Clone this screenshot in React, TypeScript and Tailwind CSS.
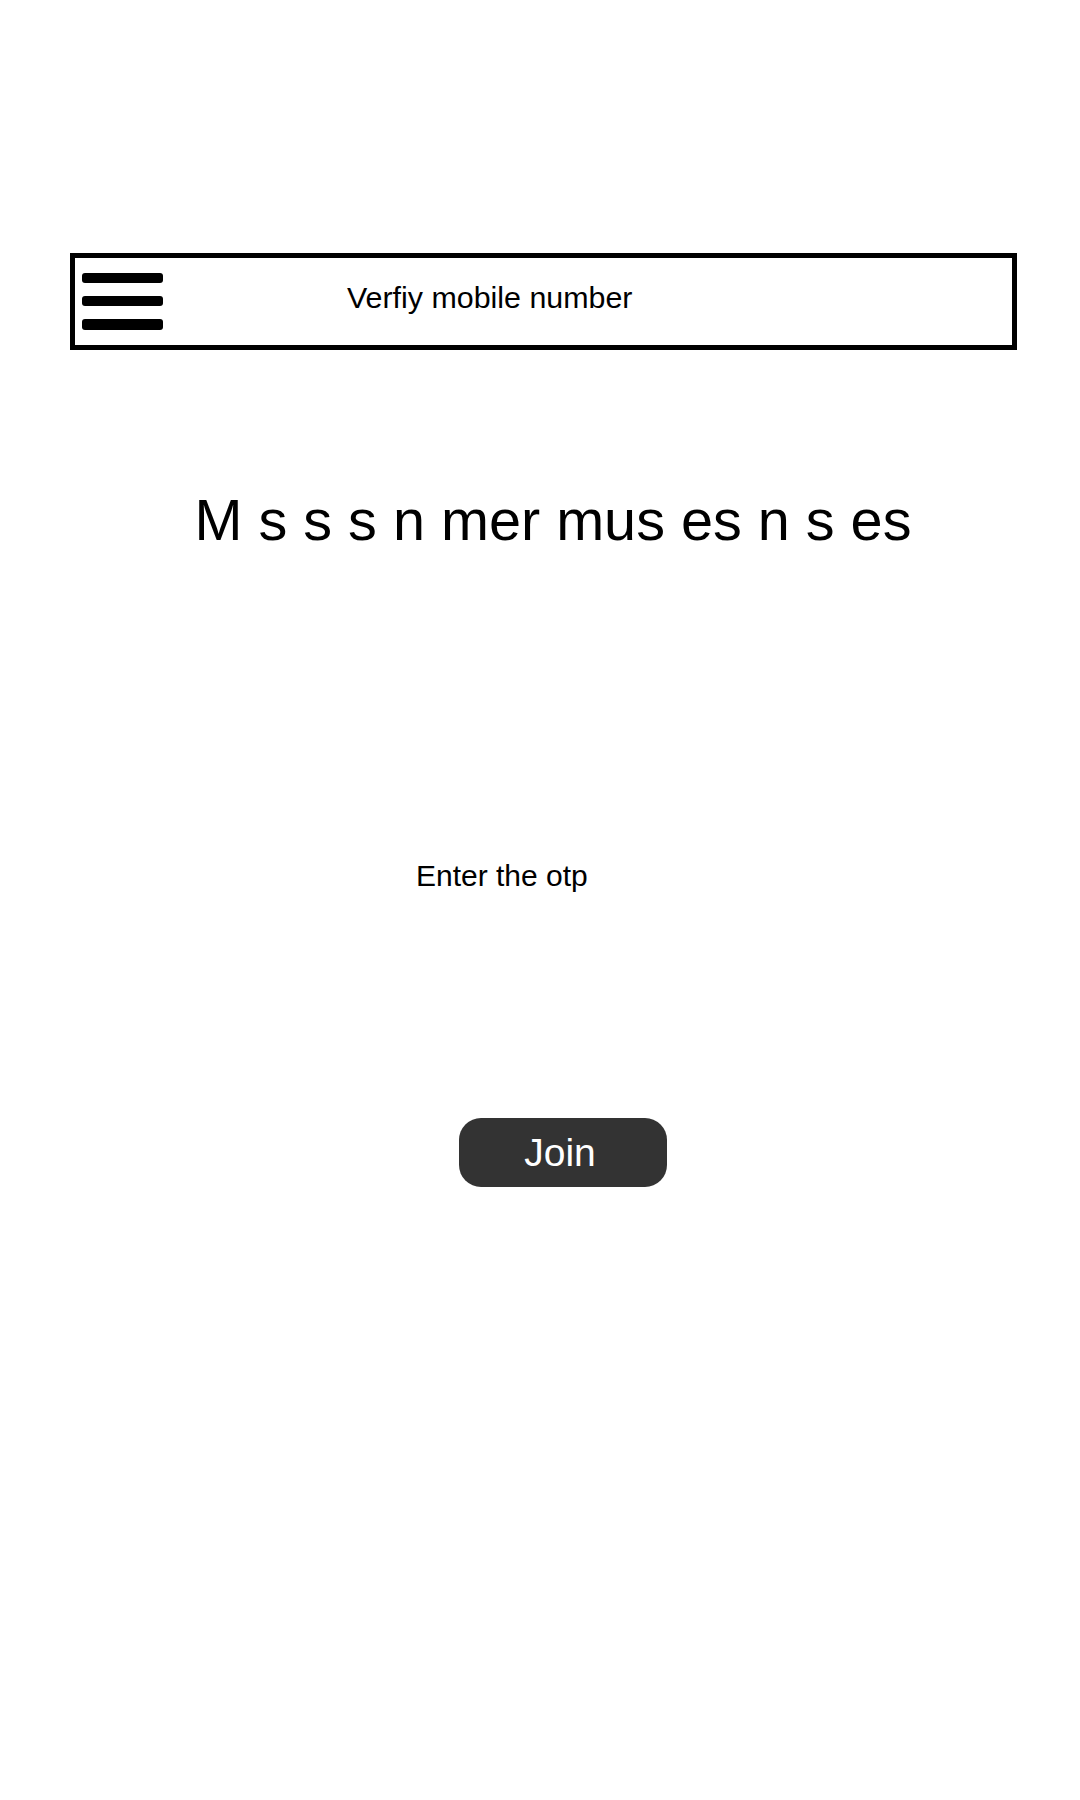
import React from "react";

function MenuIcon() {
  return (
    <div className="flex flex-col gap-[13px] pl-[7px]" aria-hidden="true">
      <span className="block h-[10px] w-[81px] rounded-[3px] bg-black" />
      <span className="block h-[10px] w-[81px] rounded-[3px] bg-black" />
      <span className="block h-[11px] w-[81px] rounded-[3px] bg-black" />
    </div>
  );
}

export default function App() {
  return (
    <div className="min-h-[1800px] w-full bg-white pt-[253px] font-['Liberation_Sans',Arial,sans-serif] text-black">
      {/* Top bar */}
      <header className="ml-[70px] mr-[63px] flex h-[97px] items-center border-[5px] border-black">
        <MenuIcon />
        <span className="mb-[8px] ml-[184px] text-[30.4px] leading-none">
          Verfiy mobile number
        </span>
      </header>

      <h1 className="mt-[142px] pl-[26px] text-center text-[57.6px] font-normal leading-none">
        M s s s n mer mus es n s es
      </h1>

      <p className="mt-[311px] pl-[416px] text-[30px] leading-none">
        Enter the otp
      </p>

      <button
        type="button"
        className="ml-[459px] mt-[227px] flex h-[69px] w-[208px] items-center justify-center rounded-[22px] bg-[#333333] pr-[6px] text-[39px] leading-none text-white"
      >
        Join
      </button>
    </div>
  );
}
